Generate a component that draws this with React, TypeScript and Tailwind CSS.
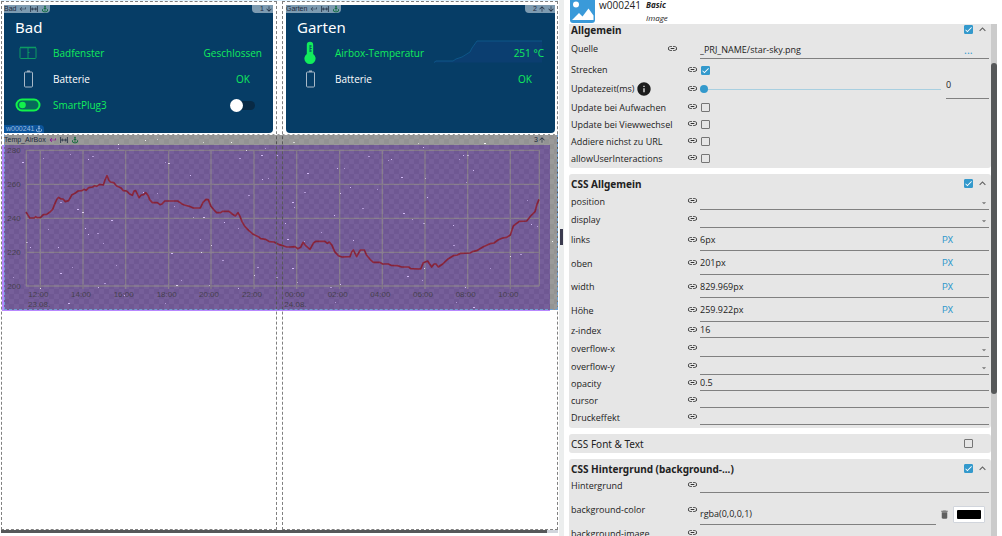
import { useId, useState, type ReactNode } from 'react'
import {
  MdAnchor,
  MdArrowDownward,
  MdArrowDropDown,
  MdArrowUpward,
  MdCheck,
  MdDelete,
  MdExpandLess,
  MdInfo,
  MdKeyboardReturn,
  MdLink,
} from 'react-icons/md'

const yTicks = [
  { label: '280', y: 61 },
  { label: '260', y: 163 },
  { label: '240', y: 265 },
  { label: '220', y: 367 },
  { label: '200', y: 468 },
]

const xTicks = [
  { label: '12:00', x: 121 },
  { label: '14:00', x: 249 },
  { label: '16:00', x: 377 },
  { label: '18:00', x: 506 },
  { label: '20:00', x: 633 },
  { label: '22:00', x: 762 },
  { label: '00:00', x: 890 },
  { label: '02:00', x: 1019 },
  { label: '04:00', x: 1147 },
  { label: '06:00', x: 1275 },
  { label: '08:00', x: 1403 },
  { label: '10:00', x: 1531 },
]

const temperature =
  '78,246 83,254 89,264 103,264 107,260 111,263 122,262 130,254 140,253 150,246 158,238 166,218 171,207 176,202 183,207 189,207 196,215 206,212 216,194 225,190 234,183 246,182 252,178 258,181 266,173 278,171 284,167 290,169 299,163 310,165 315,150 321,137 326,149 331,156 341,158 350,168 362,173 370,182 380,183 388,191 397,196 402,183 407,182 412,192 417,203 424,195 431,194 437,188 444,196 449,209 457,218 472,218 480,224 487,221 494,213 533,213 545,221 553,225 568,229 580,234 601,234 609,217 618,208 625,209 633,229 642,240 650,248 662,248 667,244 687,244 697,252 706,258 714,248 720,259 726,275 735,290 746,301 760,313 775,320 782,326 797,328 808,335 822,336 835,343 845,346 860,351 870,351 885,350 893,356 902,352 909,337 916,346 930,358 941,338 948,334 975,334 982,340 988,336 996,346 1004,365 1015,377 1026,381 1050,380 1055,366 1060,360 1070,380 1081,360 1093,360 1100,376 1110,388 1120,397 1139,397 1148,402 1165,402 1173,406 1192,407 1205,411 1226,411 1232,416 1262,417 1270,398 1283,393 1295,411 1302,402 1308,402 1315,411 1328,402 1345,386 1360,377 1372,375 1382,370 1410,369 1417,365 1430,362 1450,350 1470,341 1482,339 1494,330 1508,324 1520,322 1531,315 1540,288 1550,280 1558,274 1580,273 1592,258 1605,245 1611,223 1617,208'

const stars = [
  [22, 162], [43, 158], [88, 159], [92, 156], [118, 144], [165, 162], [168, 163], [70, 154], [190, 175],
  [60, 202], [143, 192], [157, 193], [77, 209], [174, 206], [85, 228], [97, 233], [88, 234], [48, 229],
  [111, 220], [103, 243], [58, 247], [26, 242], [30, 247], [72, 267], [60, 273], [13, 277], [40, 288],
  [104, 283], [98, 287], [116, 265], [171, 253], [200, 239], [201, 252], [222, 260], [224, 222], [193, 217],
  [203, 217], [238, 228], [211, 245], [257, 267], [254, 275], [181, 280], [176, 285], [209, 285], [238, 288],
  [276, 277], [124, 295], [165, 303], [68, 303], [203, 142], [231, 142], [239, 158], [246, 150], [265, 148],
  [261, 155], [268, 178], [262, 179], [248, 195], [277, 155], [118, 148], [82, 212], [157, 139], [145, 140],
  [293, 142], [423, 147], [418, 143], [484, 143], [388, 160], [391, 159], [368, 156], [337, 168], [344, 168],
  [307, 173], [459, 159], [463, 155], [467, 155], [473, 170], [466, 182], [401, 177], [425, 178], [350, 187],
  [304, 192], [340, 193], [377, 189], [292, 202], [294, 207], [334, 215], [362, 208], [427, 197], [527, 200],
  [403, 213], [412, 219], [453, 225], [423, 223], [285, 223], [321, 232], [287, 239], [304, 241], [353, 240],
  [453, 245], [531, 224], [537, 226], [292, 268], [297, 282], [340, 284], [330, 287], [424, 268], [422, 280],
  [407, 276], [490, 268], [510, 256], [520, 254], [465, 287], [456, 302], [473, 307], [335, 302], [552, 241],
]

function FitWidth({ size = 8 }: { size?: number }) {
  return (
    <svg width={size} height={size} viewBox="0 0 8 8" fill="none" stroke="currentColor">
      <path d="M.6 1v6M7.4 1v6M1.6 4h4.8M3 2.7 1.6 4 3 5.3M5 2.7 6.4 4 5 5.3" strokeWidth=".8" />
    </svg>
  )
}

function WidgetTab({ name, className = '', returnClass = '' }: { name: string; className?: string; returnClass?: string }) {
  return (
    <div className={`flex h-2 items-center gap-[3px] text-[7px] leading-[8px] text-slate-800 ${className}`}>
      <span>{name}</span>
      <MdKeyboardReturn size={8} className={returnClass} />
      <FitWidth />
      <MdAnchor size={8} className="text-green-800" />
    </div>
  )
}

function Card({ title, tab, order, children }: { title: string; tab: string; order: ReactNode; children: ReactNode }) {
  return (
    <div className="relative h-32 rounded-sm bg-[#063d66] px-[11px] pt-[9px] text-[#12ec5c]">
      <WidgetTab name={tab} className="absolute left-0 top-0 rounded-br-sm bg-[#7d9bb1] pr-px" returnClass="text-slate-700" />
      <div className="absolute right-0 top-0 flex h-2 items-center gap-px rounded-bl-sm bg-[#7d9bb1] pl-2 text-[7px] text-slate-800">
        {order}
      </div>
      <h2 className="font-['Noto_Sans'] text-[15px] leading-[26px] text-white">{title}</h2>
      {children}
    </div>
  )
}

function CardRow({ icon, label, labelClass = '', children }: { icon: ReactNode; label: string; labelClass?: string; children: ReactNode }) {
  return (
    <div className="relative flex h-[26px] items-center font-['Open_Sans'] text-[10px]">
      <div className="flex w-[38px] shrink-0">
        <div className="flex w-[26px] justify-center">{icon}</div>
      </div>
      <span className={`flex-1 ${labelClass}`}>{label}</span>
      {children}
    </div>
  )
}

function BatteryIcon() {
  return (
    <svg width="11" height="18" viewBox="0 0 11 18" fill="none" stroke="#a9bac9">
      <rect x="1.5" y="2" width="8" height="15" rx="1" />
      <path d="M4 1.2h3" strokeWidth="1.4" />
    </svg>
  )
}

function WindowIcon() {
  return (
    <svg width="18" height="14" viewBox="0 0 18 14" fill="none" stroke="#0d9b63">
      <rect x="1" y="1.5" width="16" height="11" rx=".8" />
      <path d="M1 1.5h16" strokeWidth="1.6" />
      <path d="M9 2v10.5M9 6.5h1.5" />
    </svg>
  )
}

function PlugIcon() {
  return (
    <svg width="26" height="14" viewBox="0 0 26 14">
      <rect x="1.5" y="1.5" width="23" height="11" rx="5.5" fill="#07695b" stroke="#12f24b" strokeWidth="2" />
      <circle cx="7.5" cy="7" r="3.3" fill="#12f24b" />
    </svg>
  )
}

function ThermometerIcon() {
  return (
    <svg width="12" height="24" viewBox="0 0 12 24" fill="#12ec5c">
      <path d="M2.8 4a3.2 3.2 0 0 1 6.4 0v8.9a5.6 5.6 0 1 1-6.4 0z" />
      <path d="M6 4v7M6 5h1.8M6 7.5h1.8M6 10h1.8" stroke="#063d66" strokeWidth=".8" />
    </svg>
  )
}

function Sparkline() {
  return (
    <svg className="absolute right-px top-0 h-[23px] w-[110px]" viewBox="0 0 110 23" fill="none">
      <path d="M1 22.5 3 21h17l3-2 6-2 8-5 2-4 5-7h65v21.5z" fill="#0b3e70" />
      <path d="M1 22.5 3 21h17l3-2 6-2 8-5 2-4 5-7h65" stroke="#0e5688" />
    </svg>
  )
}

function TemperatureChart() {
  return (
    <svg viewBox="6 45 1644 498" className="block h-auto w-full" role="img" aria-label="Temp_AirBox">
      <rect x="6" y="45" width="1644" height="498" fill="#b888ff" />
      <g stroke="#dfcaec" strokeWidth="4">
        {yTicks.map((t) => (
          <line key={t.label} x1="78" x2="1618" y1={t.y} y2={t.y} />
        ))}
        {xTicks.map((t) => (
          <line key={t.label} x1={t.x} x2={t.x} y1="61" y2="477" />
        ))}
        <path d="M79 61v407M1618 61v407" />
      </g>
      <g fill="#5d5370" fontFamily="Liberation Sans, sans-serif" fontSize="24">
        {yTicks.map((t) => (
          <text key={t.label} x="62" y={t.y + 9} textAnchor="end">
            {t.label}
          </text>
        ))}
        {xTicks.map((t) => (
          <text key={t.label} x={t.x - 6} y="502" textAnchor="middle">
            {t.label}
          </text>
        ))}
        <text x="84" y="531">23.08.</text>
        <text x="853" y="531">24.08.</text>
      </g>
      <polyline points={temperature} fill="none" stroke="#e41c48" strokeWidth="5" strokeLinejoin="round" />
    </svg>
  )
}

function StarImage() {
  return (
    <div className="h-[176px] bg-[repeating-conic-gradient(#292929_0%_25%,#373737_0%_50%)] bg-size-[10px_10px]">
      <svg viewBox="4 134 554 176" className="block size-full" preserveAspectRatio="none">
        {stars.map(([x, y], i) => (
          <rect key={i} x={x} y={y} width={i % 3 ? 1 : 2} height="1" fill="#fff" opacity={i % 2 ? 0.6 : 0.9} />
        ))}
      </svg>
    </div>
  )
}

function Canvas() {
  const [plug, setPlug] = useState(false)

  return (
    <main className="flex min-w-0 flex-1 flex-col bg-white px-px">
      <div className="relative flex min-h-0 flex-1 gap-[5px] border-t border-sky-100">
        {/* Chart widget */}
        <div className="absolute left-px right-[8px] top-36">
          <TemperatureChart />
        </div>

        {/* View columns */}
        <section className="relative flex-1 border border-dashed border-[#808080] pl-[2px] pr-[3px] pt-[3px]">
          <Card title="Bad" tab="Bad" order={<>1<MdArrowDownward size={8} /></>}>
            <CardRow icon={<WindowIcon />} label="Badfenster">
              <span>Geschlossen</span>
            </CardRow>
            <CardRow icon={<BatteryIcon />} label="Batterie" labelClass="text-white">
              <span className="pr-3">OK</span>
            </CardRow>
            <CardRow icon={<PlugIcon />} label="SmartPlug3">
              <button
                type="button"
                role="switch"
                aria-checked={plug}
                aria-label="SmartPlug3"
                onClick={() => setPlug(!plug)}
                className="mr-[7px] flex h-[9px] w-[25px] items-center rounded-full bg-[#082a45]"
              >
                <span className={`size-[13px] rounded-full bg-white ${plug ? 'ml-auto' : ''}`} />
              </button>
            </CardRow>
            <div className="absolute bottom-0 left-0 flex h-2 items-center gap-px rounded-tr-sm bg-[#0b549a] pl-[2px] pr-px text-[7px] leading-[8px] text-[#9dbce0]">
              w000241 <MdAnchor size={8} />
            </div>
          </Card>
        </section>
        <section className="relative flex-1 border border-dashed border-[#808080] pl-[3px] pr-[2px] pt-[3px]">
          <Card title="Garten" tab="Garten" order={<>2<MdArrowUpward size={8} /><MdArrowDownward size={8} /></>}>
            <CardRow icon={<ThermometerIcon />} label="Airbox-Temperatur">
              <Sparkline />
              <span className="relative">251 °C</span>
            </CardRow>
            <CardRow icon={<BatteryIcon />} label="Batterie" labelClass="text-white">
              <span className="pr-3">OK</span>
            </CardRow>
          </Card>
        </section>

        {/* Selected image widget */}
        <div className="absolute left-[3px] right-0 top-[133px]">
          <div className="opacity-50">
            <StarImage />
          </div>
          <div className="absolute inset-0 border border-dashed border-[#6f9fd0] border-t-white" />
          <div className="absolute inset-x-0 top-0 flex h-3 items-center justify-between pr-3 text-[7px] text-slate-800">
            <WidgetTab name="Temp_AirBox" returnClass="text-fuchsia-800" />
            <div className="flex items-center">3<MdArrowUpward size={8} /></div>
          </div>
        </div>
      </div>
      <div className="mb-[3px] h-[3px] bg-gray-300">
        <div className="h-full w-[98%] bg-[#565859]" />
      </div>
    </main>
  )
}

function CheckBox({ id, label, checked = false }: { id?: string; label?: string; checked?: boolean }) {
  return (
    <span className="relative flex size-[9px] shrink-0">
      <input
        id={id}
        type="checkbox"
        aria-label={label}
        defaultChecked={checked}
        className="peer size-[9px] appearance-none rounded-[1px] border border-[#757575] checked:border-[#3399cc] checked:bg-[#3399cc]"
      />
      <MdCheck size={9} className="pointer-events-none absolute inset-0 hidden text-white peer-checked:block" />
    </span>
  )
}

function Section({ title, checked = false, children }: { title: string; checked?: boolean; children?: ReactNode }) {
  const [open, setOpen] = useState(true)

  return (
    <section className={`rounded-[3px] bg-[#e6e6e6] px-[2px] ${children ? 'pb-px' : ''}`}>
      <div className="flex h-[19px] items-center">
        <h3 className={`flex-1 font-['Noto_Sans'] text-[10px] ${children ? 'font-bold' : ''}`}>{title}</h3>
        <CheckBox label={title} checked={checked} />
        {children ? (
          <button type="button" aria-label={title} onClick={() => setOpen(!open)} className="ml-[3px] text-[#606060]">
            <MdExpandLess size={13} />
          </button>
        ) : (
          <span className="w-4" />
        )}
      </div>
      {open && children}
    </section>
  )
}

type RowProps = {
  label: string
  height?: string
  linkClass?: string
  info?: boolean
  children: (id: string) => ReactNode
}

function Row({ label, height = 'h-[17px] pb-[2px]', linkClass = 'w-[13px]', info = false, children }: RowProps) {
  const id = useId()

  return (
    <div className={`flex ${height}`}>
      <div className="flex min-w-0 flex-1 items-center">
        <label htmlFor={id} className="whitespace-nowrap">{label}</label>
        {info && <MdInfo size={16} className="ml-px shrink-0 text-[#1c1c1c]" />}
      </div>
      <div className={`flex shrink-0 items-center pb-[2px] text-[#333] ${linkClass}`}>
        <MdLink size={11} />
      </div>
      <div className="flex w-[289px] shrink-0">{children(id)}</div>
    </div>
  )
}

const fieldClass = 'min-w-0 flex-1 appearance-none border-b border-[#808080] bg-transparent outline-none'

function TextRow({ label, value = '' }: { label: string; value?: string }) {
  return (
    <Row label={label}>
      {(id) => <input id={id} type="text" defaultValue={value} className={fieldClass} />}
    </Row>
  )
}

function SelectRow({ label }: { label: string }) {
  return (
    <Row label={label} height="h-[18px] pb-px">
      {(id) => (
        <div className="relative flex flex-1">
          <select id={id} className={fieldClass}>
            <option></option>
          </select>
          <MdArrowDropDown size={10} className="pointer-events-none absolute right-0 top-[5px] text-[#757575]" />
        </div>
      )}
    </Row>
  )
}

function SizeRow({ label, value, height = 'h-[23px] pb-px' }: { label: string; value: string; height?: string }) {
  return (
    <Row label={label} height={height}>
      {(id) => (
        <div className="flex flex-1 border-b border-[#808080]">
          <input id={id} type="text" defaultValue={value} className="min-w-0 flex-1 bg-transparent outline-none" />
          <button type="button" className="w-[47px] text-left font-[Roboto] text-[9px] text-[#3399cc]">PX</button>
        </div>
      )}
    </Row>
  )
}

function CheckRow({ label, checked = false, height = 'h-[17px]' }: { label: string; checked?: boolean; height?: string }) {
  return (
    <Row label={label} height={height}>
      {(id) => (
        <div className="flex items-center pl-px">
          <CheckBox id={id} checked={checked} />
        </div>
      )}
    </Row>
  )
}

function Inspector() {
  return (
    <aside className="flex w-[433px] shrink-0 flex-col overflow-hidden bg-white pr-[5px] font-['Open_Sans'] text-[9px] leading-[12px] text-[#222]">
      <header className="flex h-6 shrink-0">
        <svg width="27" height="24" viewBox="0 0 27 24">
          <path d="M1 0h25v20a3 3 0 0 1-3 3H4a3 3 0 0 1-3-3z" fill="#3a9ad9" />
          <circle cx="7" cy="4.5" r="3" fill="#fff" />
          <path d="m3 20 7-7 3.5 3.5 6-8 5 7V20z" fill="#fff" />
        </svg>
        <span className="ml-[3px] w-[47px] text-[10px] leading-[11px]">w000241</span>
        <div className="text-[8px] italic">
          <div className="h-3 font-bold leading-[9px]">Basic</div>
          <div>Image</div>
        </div>
      </header>

      <div className="flex min-h-0 flex-1">
        <div className="flex min-w-0 flex-1 flex-col gap-[6px] overflow-hidden">
          <div className="-mt-1">
            <Section title="Allgemein" checked>
              <Row label="Quelle" height="h-[22px] pb-[2px]" linkClass="w-[33px]">
                {(id) => (
                  <div className="flex flex-1 border-b border-[#808080] pt-[2px]">
                    <input id={id} type="text" defaultValue="_PRJ_NAME/star-sky.png" className="min-w-0 flex-1 bg-transparent outline-none" />
                    <button type="button" className="w-[25px] text-left text-[11px] text-[#3399cc]">...</button>
                  </div>
                )}
              </Row>
              <CheckRow label="Strecken" checked height="h-[18px]" />
              <Row label="Updatezeit(ms)" height="h-[20px]" info>
                {(id) => (
                  <>
                    <input
                      id={id}
                      type="range"
                      min={0}
                      max={5000}
                      defaultValue={0}
                      className="mr-[5px] min-w-0 flex-1 appearance-none bg-transparent [&::-webkit-slider-runnable-track]:h-px [&::-webkit-slider-runnable-track]:bg-[#a8cfe0] [&::-webkit-slider-thumb]:-mt-1 [&::-webkit-slider-thumb]:size-2 [&::-webkit-slider-thumb]:appearance-none [&::-webkit-slider-thumb]:rounded-full [&::-webkit-slider-thumb]:bg-[#3399cc]"
                    />
                    <input
                      type="text"
                      aria-label="Updatezeit(ms)"
                      defaultValue="0"
                      className="w-[43px] border-b border-[#808080] bg-transparent pb-2 outline-none"
                    />
                  </>
                )}
              </Row>
              <CheckRow label="Update bei Aufwachen" />
              <CheckRow label="Update bei Viewwechsel" />
              <CheckRow label="Addiere nichst zu URL" />
              <CheckRow label="allowUserInteractions" />
            </Section>
          </div>

          <Section title="CSS Allgemein" checked>
            <SelectRow label="position" />
            <SelectRow label="display" />
            <SizeRow label="links" value="6px" />
            <SizeRow label="oben" value="201px" height="h-[24px] pb-px" />
            <SizeRow label="width" value="829.969px" />
            <SizeRow label="Höhe" value="259.922px" height="h-[24px] pb-px" />
            <TextRow label="z-index" value="16" />
            <SelectRow label="overflow-x" />
            <SelectRow label="overflow-y" />
            <TextRow label="opacity" value="0.5" />
            <TextRow label="cursor" />
            <TextRow label="Druckeffekt" />
          </Section>

          <Section title="CSS Font & Text" />

          <Section title="CSS Hintergrund (background-...)" checked>
            <TextRow label="Hintergrund" />
            <Row label="background-color" height="h-[31px] pb-px">
              {(id) => (
                <div className="flex flex-1 items-center">
                  <input id={id} type="text" defaultValue="rgba(0,0,0,1)" className={`self-stretch pt-2 ${fieldClass}`} />
                  <button type="button" aria-label="Löschen" className="ml-[3px] mt-2 text-[#606060]">
                    <MdDelete size={11} />
                  </button>
                  <button type="button" aria-label="Farbe" className="ml-[3px] mr-1 mt-2 h-[17px] w-8 rounded-[1px] border border-gray-300 bg-white p-[3px]">
                    <span className="block h-full rounded-[1px] bg-black" />
                  </button>
                </div>
              )}
            </Row>
            <TextRow label="background-image" />
          </Section>
        </div>

        {/* Scrollbar */}
        <div className="w-[6px] shrink-0 bg-[#cbcbcb] pt-[39px]">
          <div className="h-[70%] rounded-[3px] bg-[#565859]" />
        </div>
      </div>
    </aside>
  )
}

export default function App() {
  return (
    <div className="flex h-screen overflow-hidden bg-white font-['Liberation_Sans',sans-serif]">
      <Canvas />
      <div className="mr-[5px] flex w-[5px] shrink-0 items-center bg-[#eceeee] pb-[62px]">
        <div className="ml-px h-4 w-[3px] bg-[#3b3b4f]" />
      </div>
      <Inspector />
    </div>
  )
}
